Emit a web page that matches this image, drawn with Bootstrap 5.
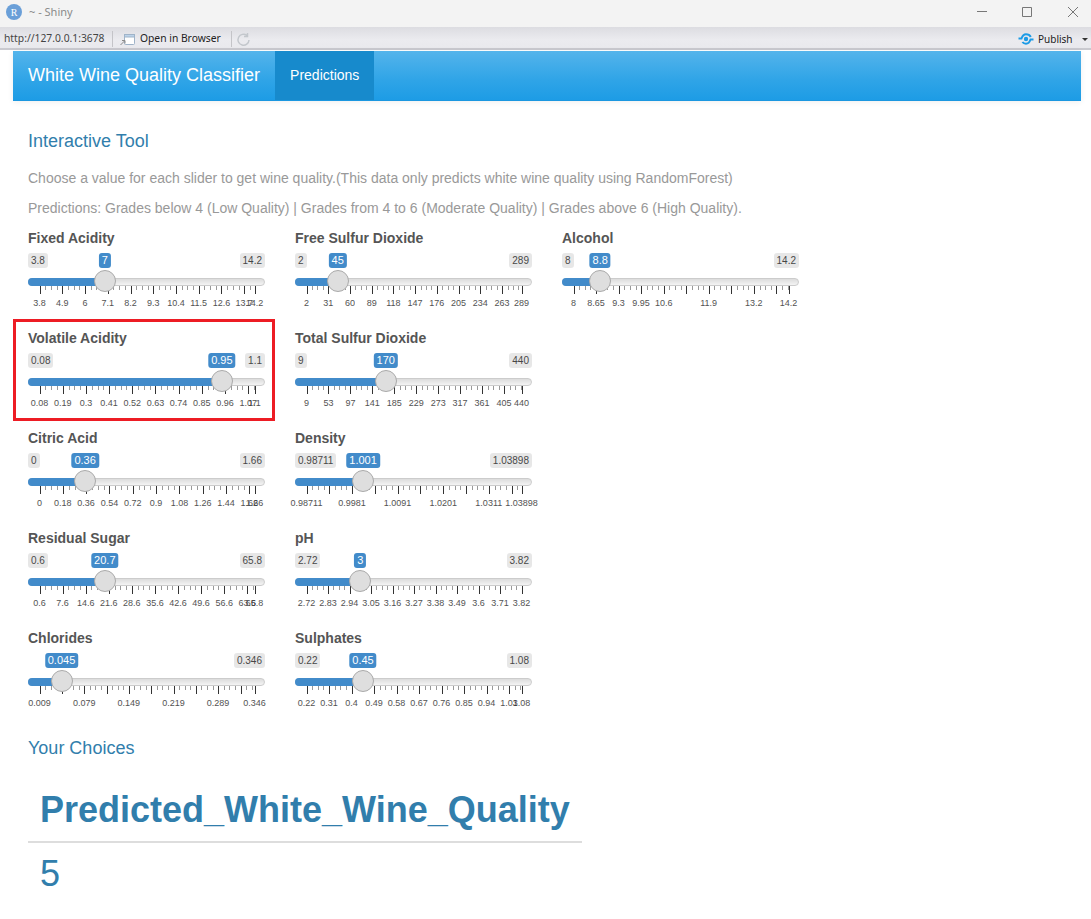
<!DOCTYPE html>
<html lang="en">
<head>
<meta charset="utf-8">
<title>White Wine Quality Classifier</title>
<link rel="stylesheet" href="https://cdn.jsdelivr.net/npm/bootstrap@5.3.0/dist/css/bootstrap.min.css">
<style>
html,body{height:919px;overflow:hidden;background:#fff;}
body{font-family:"Liberation Sans",Arial,sans-serif;font-size:14px;color:#555;}
.win-title{height:27px;background:#f3f3f3;padding:0 4px 3px 6px;gap:7px;font-family:"Noto Sans",sans-serif;font-size:11px;color:#8a8a8a;}
.win-ctrl{margin-left:auto;}
.win-ctrl svg{display:block;}
.win-tools{height:23px;background:linear-gradient(#dcdce1,#ebebef 60%,#e9e9ed);border-bottom:2px solid #c9c9cf;font-family:"Noto Sans",sans-serif;font-size:10.3px;color:#222;padding:3px 0 0 4px;}
.win-url{width:108px;font-size:10.3px;color:#444;white-space:nowrap;}
.win-sep{width:1px;height:16px;background:#c4c4c8;}
.win-open{margin-left:7px;width:111px;gap:5px;white-space:nowrap;}
.win-publish{margin-left:auto;gap:4px;width:73px;white-space:nowrap;font-size:10px;}
.win-caret{width:0;height:0;border-left:3px solid transparent;border-right:3px solid transparent;border-top:3px solid #333;margin-left:5px;}
.top-nav{margin:1px 10px 0 13px;height:50px;background:linear-gradient(#54b4eb,#2fa4e7 60%,#1d9ce5);border-bottom:1px solid #1b97e0;box-shadow:0 1px 6px rgba(0,0,0,.07);padding:0;flex-wrap:nowrap;justify-content:flex-start;align-items:flex-start;}
.top-nav .navbar-brand{color:#fff;font-size:18px;padding:0 15px;margin:0;line-height:48px;}
.top-nav .navbar-nav .nav-link.active{color:#fff;background:#178acc;height:49px;line-height:48px;padding:0 15px;font-size:14px;}
.page-body{padding:0 0 0 28px;}
.sect-head{font-size:18px;font-weight:400;line-height:20px;color:#317eac;margin:0;}
.head-tool{margin-top:30px;}
.head-choice{margin-top:10px;}
.intro{color:#999;margin:0;line-height:20px;}
.intro-a{margin-top:17px;}
.intro-b{margin-top:10px;}
.slider-grid{gap:30px;margin-top:10px;}
.slider-col{width:237px;}
.sl-block{height:100px;position:relative;}
.sl-name{font-weight:700;font-size:14px;line-height:20px;margin:0 0 5px;color:#555;display:block;}
.sl-body{position:relative;height:70px;}
.sl-ends{justify-content:space-between;}
.sl-pill{font-size:10px;line-height:11px;padding:2px 3px;border-radius:3px;background:rgba(0,0,0,.1);color:#333;opacity:.9;}
.sl-val{position:absolute;top:0;transform:translateX(-50%);font-size:11px;line-height:11px;padding:2px 3px;border-radius:3px;background:#428bca;color:#fff;white-space:nowrap;}
.sl-track{position:absolute;left:0;right:0;top:25px;height:8px;border-radius:4px;background:linear-gradient(#dcdcdc,#f4f4f4);border:1px solid #ccc;}
.sl-fill{position:absolute;left:0;top:25px;height:8px;border-radius:4px 0 0 4px;background:#428bca;}
.sl-handle{position:absolute;top:17px;width:22px;height:22px;margin-left:-11px;border-radius:50%;background:#dedede;border:1px solid #aaa;}
.sl-tick{position:absolute;top:33px;width:1px;background:#333;height:8px;}
.sl-tick.mn{height:4px;background:#999;}
.sl-lab{position:absolute;top:45px;transform:translateX(-50%);font-size:9px;line-height:10px;color:#333;white-space:nowrap;opacity:.85;}
.anno{position:absolute;left:-15px;right:-10px;top:-9px;bottom:7px;border:3px solid #ed1c24;pointer-events:none;}
.res-table{width:553px;margin:20px 0 0;}
.res-table th{font-size:36px;line-height:40px;font-weight:700;color:#317eac;padding:12px 12px 11px;border-bottom:2px solid #ddd;background:transparent;}
.res-table td{font-size:36px;line-height:40px;color:#317eac;padding:11px 12px;border:0;background:transparent;}
</style>
</head>
<body>
<div class="win-title d-flex align-items-center">
  <svg width="16" height="16" viewBox="0 0 16 16"><circle cx="8" cy="8" r="8" fill="#6a9fd8"/><text x="8" y="11.5" text-anchor="middle" font-size="10" font-family="Liberation Serif" fill="#fff">R</text></svg>
  <span>~ - Shiny</span>
  <svg class="win-ctrl" width="110" height="16" viewBox="0 0 110 16"><path d="M0 7.500h10" stroke="#777"/><path d="M45.500 3.500h9v9h-9z" fill="none" stroke="#777"/><path d="M91 3l10 10M101 3L91 13" stroke="#777" fill="none"/></svg>
</div>
<div class="win-tools d-flex align-items-center">
  <span class="win-url">http://127.0.0.1:3678</span>
  <span class="win-sep"></span>
  <span class="win-open d-flex align-items-center">
    <svg width="15" height="13" viewBox="0 0 15 13"><rect x="4.500" y="1.500" width="10" height="10" rx="1" fill="#fff" stroke="#9fb3c8"/><rect x="4.500" y="1.500" width="10" height="2.500" fill="#bcd3ea" stroke="#9fb3c8"/><path d="M0.500 12l4-4M2 7.500h3v3" fill="none" stroke="#8a8a8a"/></svg>
    <span>Open in Browser</span>
  </span>
  <span class="win-sep"></span>
  <svg class="ms-1" width="16" height="15" viewBox="0 0 16 15"><path d="M13 8a5.500 5.500 0 1 1-2-4.500M11.500 1v3.500H8" fill="none" stroke="#c3c7cc" stroke-width="1.500"/></svg>
  <span class="win-publish d-flex align-items-center">
    <svg width="16" height="12" viewBox="0 0 16 12"><circle cx="8" cy="6" r="2.200" fill="#1c9be6"/><path d="M0.500 5.500h3C4.500 2.500 6 1.300 8 1.300c2.500 0 4 1.200 4.800 2.700M15.500 6.500h-3C11.500 9.500 10 10.700 8 10.700c-1.700 0-2.800-.6-3.600-1.700" fill="none" stroke="#1c9be6" stroke-width="2"/></svg>
    <span>Publish</span><span class="win-caret"></span>
  </span>
</div>
<nav class="navbar top-nav">
  <a class="navbar-brand" href="#">White Wine Quality Classifier</a>
  <ul class="navbar-nav flex-row"><li class="nav-item"><a class="nav-link active" href="#">Predictions</a></li></ul>
</nav>
<main class="page-body">
  <h3 class="sect-head head-tool">Interactive Tool</h3>
  <p class="intro intro-a">Choose a value for each slider to get wine quality.(This data only predicts white wine quality using RandomForest)</p>
  <p class="intro intro-b">Predictions: Grades below 4 (Low Quality) | Grades from 4 to 6 (Moderate Quality) | Grades above 6 (High Quality).</p>
  <div class="slider-grid d-flex" id="grid"></div>
  <h3 class="sect-head head-choice">Your Choices</h3>
  <table class="table res-table"><thead><tr><th>Predicted_White_Wine_Quality</th></tr></thead><tbody><tr><td>5</td></tr></tbody></table>
</main>
<script src="https://cdn.jsdelivr.net/npm/bootstrap@5.3.0/dist/js/bootstrap.bundle.min.js"></script>
<script>
const cols=[
[
 {n:'Fixed Acidity',min:3.8,max:14.2,v:7,t:['3.8','4.9','6','7.1','8.2','9.3','10.4','11.5','12.6','13.7','14.2']},
 {n:'Volatile Acidity',min:.08,max:1.1,v:.95,a:1,t:['0.08','0.19','0.3','0.41','0.52','0.63','0.74','0.85','0.96','1.07','1.1']},
 {n:'Citric Acid',min:0,max:1.66,v:.36,t:['0','0.18','0.36','0.54','0.72','0.9','1.08','1.26','1.44','1.62','1.66']},
 {n:'Residual Sugar',min:.6,max:65.8,v:20.7,t:['0.6','7.6','14.6','21.6','28.6','35.6','42.6','49.6','56.6','63.6','65.8']},
 {n:'Chlorides',min:.009,max:.346,v:.045,noMin:1,t:['0.009','0.044','0.079','0.114','0.149','0.184','0.219','0.254','0.289','0.324','0.346'],h:[1,3,5,7,9]}
],[
 {n:'Free Sulfur Dioxide',min:2,max:289,v:45,t:['2','31','60','89','118','147','176','205','234','263','289']},
 {n:'Total Sulfur Dioxide',min:9,max:440,v:170,t:['9','53','97','141','185','229','273','317','361','405','440']},
 {n:'Density',min:.98711,max:1.03898,v:1.001,vl:'1.001',t:['0.98711','0.9926','0.9981','1.0036','1.0091','1.0146','1.0201','1.0256','1.0311','1.0366','1.03898'],h:[1,3,5,7,9]},
 {n:'pH',min:2.72,max:3.82,v:3,t:['2.72','2.83','2.94','3.05','3.16','3.27','3.38','3.49','3.6','3.71','3.82']},
 {n:'Sulphates',min:.22,max:1.08,v:.45,t:['0.22','0.31','0.4','0.49','0.58','0.67','0.76','0.85','0.94','1.03','1.08']}
],[
 {n:'Alcohol',min:8,max:14.2,v:8.8,t:['8','8.65','9.3','9.95','10.6','11.25','11.9','12.55','13.2','13.85','14.2'],h:[5,7,9]}
]];
const L=11.5,W=215;
const grid=document.getElementById('grid');
for(const c of cols){
  const col=document.createElement('div');col.className='slider-col';
  for(const s of c){
    const pos=x=>L+(x-s.min)/(s.max-s.min)*W;
    let ticks='';
    const vals=s.t.map(Number);
    vals.forEach((x,i)=>{
      const p=pos(x);
      ticks+=`<i class="sl-tick" style="left:${p.toFixed(1)}px"></i>`;
      if(!(s.h||[]).includes(i)) ticks+=`<span class="sl-lab" style="left:${p.toFixed(1)}px">${s.t[i]}</span>`;
      if(i<vals.length-1){
        const step=vals[1]-vals[0];
        for(let k=1;k<4;k++){const y=x+step*k/4;if(y<s.max-1e-9)ticks+=`<i class="sl-tick mn" style="left:${pos(y).toFixed(1)}px"></i>`;}
      }
    });
    const hp=pos(s.v)-1;
    const b=document.createElement('div');b.className='sl-block';
    b.innerHTML=`<label class="sl-name">${s.n}</label>
    <div class="sl-body">
      <div class="sl-ends d-flex"><span class="sl-pill${s.noMin?' invisible':''}">${s.noMin?'':s.min}</span><span class="sl-pill">${s.max}</span></div>
      <span class="sl-val" style="left:${hp.toFixed(1)}px">${s.vl||s.v}</span>
      <div class="sl-track"></div>
      <div class="sl-fill" style="width:${hp.toFixed(1)}px"></div>
      ${ticks}
      <div class="sl-handle" style="left:${hp.toFixed(1)}px"></div>
    </div>${s.a?'<div class="anno"></div>':''}`;
    col.appendChild(b);
  }
  grid.appendChild(col);
}
</script>
</body>
</html>
